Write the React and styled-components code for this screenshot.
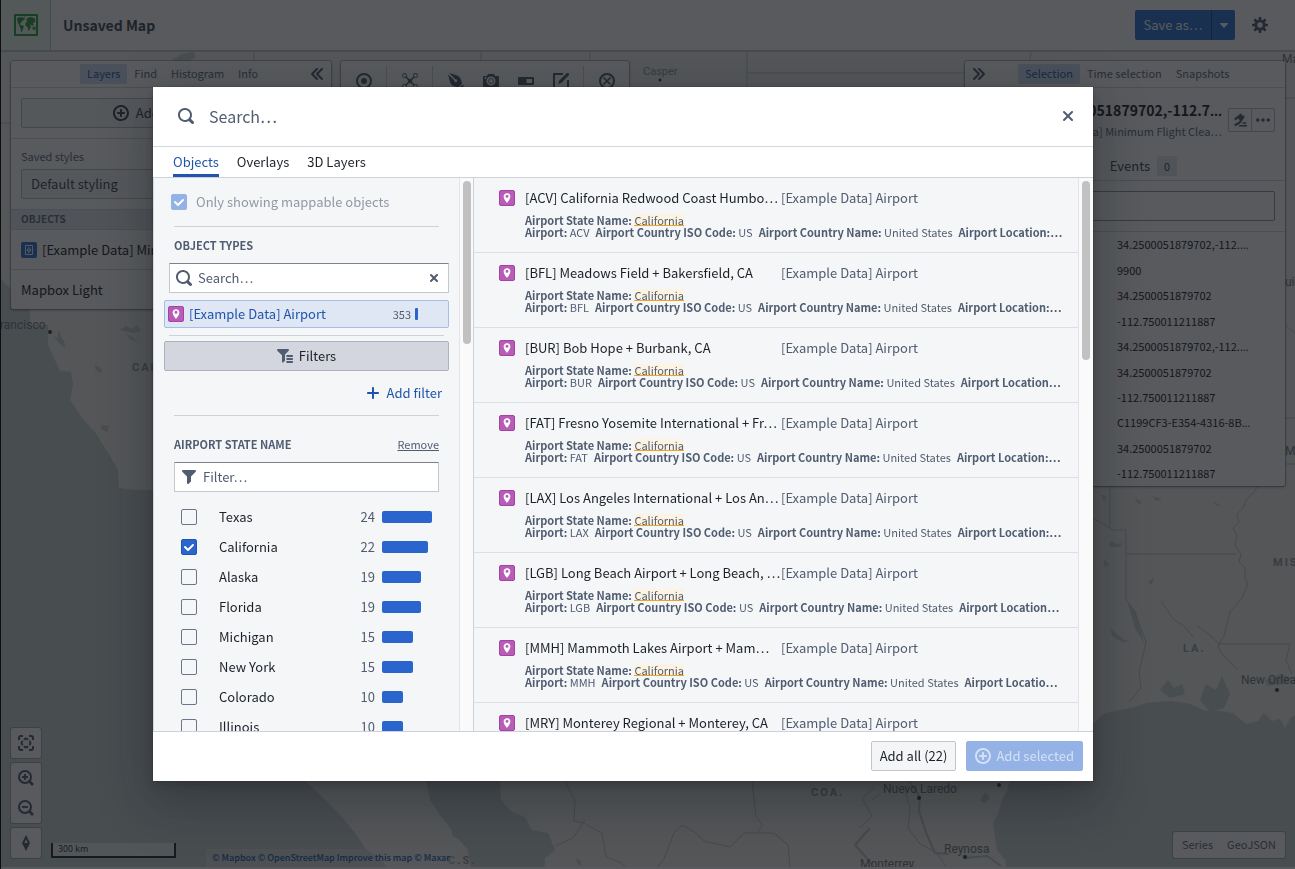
import React from "react";
import styled, { createGlobalStyle, css } from "styled-components";

const GlobalStyle = createGlobalStyle`
  *, *::before, *::after { box-sizing: border-box; }
  html, body, #root { height: 100%; }
  body {
    margin: 0;
    overflow: hidden;
    font-family: "Noto Sans CJK SC", "Noto Sans", sans-serif;
    font-size: 13px;
    line-height: 18px;
    color: #1c2127;
  }
  button, input, select { font: inherit; color: inherit; margin: 0; }
  button { cursor: pointer; }
  h1, h2, h3, p, ul, dl, dd { margin: 0; padding: 0; font-weight: inherit; font-size: inherit; }
  ul { list-style: none; }
`;

/* ---------- icons ---------- */

const PATHS = {
  search: "M15.55 13.43l-2.67-2.68a6.94 6.94 0 001.11-3.76c0-3.87-3.13-7-7-7s-7 3.13-7 7 3.13 7 7 7c1.39 0 2.68-.42 3.76-1.11l2.68 2.67a1.498 1.498 0 102.12-2.12zm-8.56-1.44c-2.76 0-5-2.24-5-5s2.24-5 5-5 5 2.24 5 5-2.24 5-5 5z",
  cross: "M9.41 8l3.29-3.29c.19-.18.3-.43.3-.71a1.003 1.003 0 00-1.71-.71L8 6.59l-3.29-3.3a1.003 1.003 0 00-1.42 1.42L6.59 8 3.3 11.29c-.19.18-.3.43-.3.71a1.003 1.003 0 001.71.71L8 9.41l3.29 3.29c.18.19.43.3.71.3a1.003 1.003 0 00.71-1.71L9.41 8z",
  smallCross: "M9.41 8l2.29-2.29c.19-.18.3-.43.3-.71a1.003 1.003 0 00-1.71-.71L8 6.59l-2.29-2.3a1.003 1.003 0 00-1.42 1.42L6.59 8 4.3 10.29c-.19.18-.3.43-.3.71a1.003 1.003 0 001.71.71L8 9.41l2.29 2.29c.18.19.43.3.71.3a1.003 1.003 0 00.71-1.71L9.41 8z",
  tick: "M12 5c-.28 0-.53.11-.71.29L7 9.59l-2.29-2.3a1.003 1.003 0 00-1.42 1.42l3 3c.18.18.43.29.71.29s.53-.11.71-.29l5-5A1.003 1.003 0 0012 5z",
  filter: "M13.99.99h-12a1.003 1.003 0 00-.71 1.71l4.71 4.71V14a1.003 1.003 0 001.71.71l2-2c.18-.18.29-.43.29-.71V7.41L14.7 2.7a1.003 1.003 0 00-.71-1.71z",
  filterList: "M1 1h10a1 1 0 01.7 1.7L8 6.6V12.400a1 1 0 01-.3.700l-1.500 1.300A.8.8 0 015 13.700V7.200L.3 2.700A1 1 0 011 1zM10 7h5.300q.7 0 .7.700v.6q0 .7-.7.700H10q-.7 0-.7-.7v-.6q0-.7.7-.7zM10 10h5.300q.7 0 .7.700v.6q0 .7-.7.700H10q-.7 0-.7-.7v-.6q0-.7.7-.7zM10 13h5.300q.7 0 .7.700v.6q0 .7-.7.700H10q-.7 0-.7-.7v-.6q0-.7.7-.7z",
  marker: "M8 1.500C5.200 1.500 3.500 3.400 3.500 6c0 3.600 4.500 8.500 4.500 8.500S12.500 9.600 12.500 6c0-2.600-1.700-4.500-4.500-4.500zm0 6.300a2 2 0 110-4 2 2 0 010 4z",
  plus: "M13 7H9V3c0-.55-.45-1-1-1s-1 .45-1 1v4H3c-.55 0-1 .45-1 1s.45 1 1 1h4v4c0 .55.45 1 1 1s1-.45 1-1V9h4c.55 0 1-.45 1-1s-.45-1-1-1z",
  add: "M10.990 6.990h-2v-2c0-.55-.45-1-1-1s-1 .45-1 1v2h-2c-.55 0-1 .45-1 1s.45 1 1 1h2v2c0 .55.45 1 1 1s1-.45 1-1v-2h2c.55 0 1-.45 1-1s-.45-1-1-1zm-3-7c-4.420 0-8 3.580-8 8s3.580 8 8 8 8-3.580 8-8-3.580-8-8-8zm0 14c-3.310 0-6-2.690-6-6s2.690-6 6-6 6 2.690 6 6-2.690 6-6 6z",
  chevronsLeft: "M4.41 8l4.29-4.29c.19-.18.3-.43.3-.71a1.003 1.003 0 00-1.710-.71l-5 5a1.014 1.014 0 000 1.420l5 5a1.003 1.003 0 001.420-1.420L4.410 8zm5 0l4.290-4.290c.19-.18.3-.43.3-.71a1.003 1.003 0 00-1.710-.71l-5 5a1.014 1.014 0 000 1.420l5 5a1.003 1.003 0 001.420-1.420L9.410 8z",
  chevronsRight: "M11.590 8L7.300 3.710C7.110 3.530 7 3.280 7 3a1.003 1.003 0 011.710-.71l5 5a1.014 1.014 0 010 1.420l-5 5a1.003 1.003 0 01-1.420-1.420L11.590 8zm-5 0L2.300 3.710C2.110 3.530 2 3.280 2 3a1.003 1.003 0 011.710-.71l5 5a1.014 1.014 0 010 1.420l-5 5a1.003 1.003 0 01-1.420-1.420L6.590 8z",
  caret: "M12 6.5c0-.28-.22-.5-.5-.5h-7a.495.495 0 00-.37.83l3.5 4c.09.1.22.17.37.17s.28-.07.37-.17l3.5-4c.08-.09.13-.2.13-.33z",
  more: "M2 6.030a2 2 0 100 4 2 2 0 100-4zM14 6.030a2 2 0 100 4 2 2 0 100-4zM8 6.030a2 2 0 100 4 2 2 0 100-4z",
  pen: "M1.200 0L6 1.600c3 .7 4.500 1.400 6 3.200 1.100 1.500 1.600 3.500 2 6L10.500 14.300C7.800 14 5.500 13.500 4.200 12.300 2.600 10.800 2 9.300 1.500 7L0 1.200l6.200 6.100a1.500 1.500 0 101-1L1.200 0zM14.800 11.700l1.200 1.100-3.600 3.200-1.200-1.200z",
  camera: "M10 8a2 2 0 11-4 0 2 2 0 014 0zM15 3h-3l-1-2H5L4 3H1a1 1 0 00-1 1v9q0 1 1 1h14q1 0 1-1V4q0-1-1-1zM2.500 6a1 1 0 110-2 1 1 0 010 2zM8 12.500a4.500 4.500 0 110-9 4.500 4.500 0 010 9zm0-1.800a2.700 2.700 0 100-5.400 2.700 2.700 0 000 5.400z",
  capsule: "M1 4h14q1 0 1 1v6q0 1-1 1H1q-1 0-1-1V5q0-1 1-1zM8.500 6v4H14V6z",
  compass: "M8 0l4 8-4 8-4-8zM8 4.200L6.300 8h3.400z",
  edit: "M5 11l1.300-3.600L13.400.4a1.400 1.400 0 012.200 2.100L8.600 9.700z",
};

const Svg = styled.svg`
  display: block;
  flex: none;
  fill: currentColor;
`;

function Icon({ name, size = 16 }) {
  return (
    <Svg width={size} height={size} viewBox="0 0 16 16" aria-hidden="true">
      <path fillRule="evenodd" d={PATHS[name]} />
    </Svg>
  );
}

const Stroked = styled(Svg)`
  fill: none;
  stroke: currentColor;
  stroke-width: ${(p) => p.$w || 2};
`;

const TargetIcon = () => (
  <Stroked width="16" height="16" viewBox="0 0 16 16"><circle cx="8" cy="8" r="7" /><circle cx="8" cy="8" r="2" fill="currentColor" /></Stroked>
);
const GraphIcon = () => (
  <Stroked width="16" height="16" viewBox="0 0 16 16" $w={1}>
    <circle cx="2.500" cy="2.500" r="2" /><circle cx="13.500" cy="2.500" r="2" /><circle cx="2.500" cy="13.500" r="2" /><circle cx="13.500" cy="13.500" r="2" />
    <path d="M4 4l8 8M12 4l-8 8" strokeWidth="1.500" /><circle cx="8" cy="8" r="1.500" fill="currentColor" />
  </Stroked>
);
const AnnotateIcon = () => (
  <Stroked width="16" height="16" viewBox="0 0 16 16"><path d="M10 1H1v14h14V7" /><path d={PATHS.edit} fill="currentColor" stroke="none" /></Stroked>
);
const ClearIcon = () => (
  <Stroked width="16" height="16" viewBox="0 0 16 16"><circle cx="8" cy="8" r="7" /><path d="M4.500 4.500l7 7M11.500 4.500l-7 7" strokeWidth="1.700" /></Stroked>
);
const CogIcon = () => (
  <Stroked width="16" height="16" viewBox="0 0 16 16">
    <circle cx="8" cy="8" r="4.200" strokeWidth="2.800" />
    <path strokeWidth="2.600" d="M8 0v3M8 13v3M0 8h3M13 8h3M2.300 2.300l2.200 2.200M11.500 11.500l2.200 2.200M13.700 2.300l-2.200 2.200M4.500 11.500l-2.200 2.200" />
  </Stroked>
);
const FitIcon = () => (
  <Stroked width="16" height="16" viewBox="0 0 16 16">
    <path d="M1 5V3q0-2 2-2h2M11 1h2q2 0 2 2v2M15 11v2q0 2-2 2h-2M5 15H3q-2 0-2-2v-2" />
    <path strokeWidth="1.800" d="M5.800 4.600L8 3.400l2.200 1.200M5.800 11.400L8 12.600l2.200-1.200M4.600 5.800L3.400 8l1.200 2.200M11.400 5.800L12.600 8l-1.200 2.200" />
  </Stroked>
);
const ZoomIcon = ({ plus }) => (
  <Stroked width="16" height="16" viewBox="0 0 16 16">
    <circle cx="7" cy="7" r="6" /><path d="M11.500 11.500l3.500 3.500" strokeWidth="2.600" /><path strokeWidth="1.800" d={plus ? "M4 7h6M7 4v6" : "M4 7h6"} />
  </Stroked>
);
const StyleIcon = () => (
  <Stroked width="14" height="14" viewBox="0 0 16 16">
    <path d="M2 7.500L9.500 1.500 7 7l5.500-3.500L7.500 11 2 14" strokeWidth="2.400" strokeLinejoin="bevel" /><path d="M7 14.500h9M11 11.500h4" strokeWidth="1.800" />
  </Stroked>
);
const DataIcon = () => (
  <Stroked width="16" height="16" viewBox="0 0 16 16" $w={1}>
    <path d="M4.500 3.500h7v9h-7z" /><path d="M8 5v1.500M8 9.500V11M6.500 7h3v2h-3z" />
  </Stroked>
);
const WorldLogo = () => (
  <Svg width="24" height="22" viewBox="0 0 24 22">
    <path fillRule="evenodd" d="M1 0h22q1 0 1 1v20q0 1-1 1H1q-1 0-1-1V1q0-1 1-1zM2 2v18h20V2z" />
    <path d="M3 4l3-1 5 1-1 2-2 1-1 2-1.500 1 1.500 1 3 1-1 3-1.500 3L7 18l-.5-4L5 11 3.500 8z" />
    <path d="M12 6l2-2.500 3-.5 4 1.500V8l-2 1 .5 2-1.500 1-1-1.500L16 11l1 2-1.500 2.500-1 1.500-1-4-2-1.500 0-2.500 2-2z" />
    <path d="M19 12.500l2.500.5v2.500l-1.500.5-1.500-1zM9 2.500h2.500v1z" />
  </Svg>
);

/* The CJK face centres an ellipsis after digits; this one keeps it on the baseline. */
const Dots = styled.span`
  font-family: "Open Sans", sans-serif;
`;

/* ---------- background application ---------- */

const AppFrame = styled.div`
  height: 100%;
  display: flex;
  flex-direction: column;
  border-left: 1px solid #000;
  background: #f6f7f9;
  overflow: hidden;
`;

const TopBar = styled.header`
  flex: none;
  height: 52px;
  display: flex;
  align-items: center;
  background: #fff;
  border-bottom: 2px solid #c5cbd3;
  padding-right: 27px;
`;

const LogoBox = styled.div`
  width: 50px;
  align-self: stretch;
  display: grid;
  place-items: center;
  background: #eef9ee;
  color: #27a03a;
  border-right: 1px solid #a3dba6;
`;

const AppTitle = styled.h1`
  flex: 1;
  padding-left: 12px;
  font-size: 14px;
  font-weight: 700;
  color: #404854;
`;

const SaveGroup = styled.div`
  display: flex;
  border-radius: 2px;
  overflow: hidden;
  margin-right: 17px;
`;

const SaveButton = styled.button`
  height: 30px;
  border: 0;
  border-left: ${(p) => (p.$split ? "1px solid #1a4a94" : "0")};
  padding: 0;
  width: ${(p) => (p.$split ? "24px" : "76px")};
  display: flex;
  align-items: center;
  justify-content: center;
  white-space: nowrap;
  background: #2d72d2;
  color: #fff;
`;

const PlainButton = styled.button`
  border: 0;
  background: none;
  padding: 0;
  display: grid;
  place-items: center;
  color: #505c70;
`;

const Stage = styled.main`
  flex: 1;
  position: relative;
  min-height: 0;
  background: #f0f0ee;
  border-bottom: 2px solid #fff;
`;

const MapCanvas = styled.svg`
  position: absolute;
  inset: 0;
  width: 100%;
  height: 100%;
  font-family: Roboto, sans-serif;
`;

const Hud = styled.div`
  position: absolute;
  inset: 0;
  padding: 9px 10px;
  display: flex;
  flex-direction: column;
  justify-content: space-between;
`;

const HudTop = styled.div`
  display: flex;
  align-items: flex-start;
  gap: 10px;
`;

const Panel = styled.section`
  width: 320px;
  background: #fff;
  border-radius: 2px;
  box-shadow: 0 0 0 1px rgba(17, 20, 24, 0.2), 0 1px 3px rgba(17, 20, 24, 0.4);
  color: #404854;
`;

const PanelTabs = styled.nav`
  height: 27px;
  display: flex;
  align-items: center;
  padding: ${(p) => p.$pad};
  border-bottom: 1px solid #d3d8de;
`;

const PanelTab = styled.button`
  border: 0;
  border-radius: 2px;
  height: 20px;
  line-height: 18px;
  padding: 0 7px 2px;
  font-size: 11px;
  white-space: nowrap;
  background: ${(p) => (p.$active ? "#cfdff7" : "transparent")};
  color: ${(p) => (p.$active ? "#215db0" : "#5f6b7c")};
`;

const TabList = styled.div`
  flex: 1;
  display: flex;
  padding-left: ${(p) => p.$l};
`;

const Spacer = styled.div`
  flex: 1;
`;

const PanelBlock = styled.div`
  padding: 10px;
  border-bottom: 1px solid #d3d8de;
`;

const OutlineButton = styled.button`
  width: 100%;
  height: 30px;
  display: flex;
  align-items: center;
  justify-content: center;
  gap: 7px;
  border: 1px solid #b9bec6;
  border-radius: 2px;
  background: #f6f7f9;
`;

const FieldLabel = styled.label`
  display: block;
  font-size: 11px;
  line-height: 14px;
  margin-bottom: 6px;
  color: #5f6b7c;
`;

const StyleSelect = styled.select`
  appearance: none;
  width: 100%;
  height: 30px;
  padding: 0 9px;
  border: 1px solid #b9bec6;
  border-radius: 2px;
  background: #f6f7f9;
`;

const PanelHeading = styled.h2`
  height: 20px;
  padding: 0 10px;
  line-height: 18px;
  font-size: 10px;
  font-weight: 700;
  color: #5f6b7c;
  background: #e5e8ec;
  border-bottom: 1px solid #d3d8de;
`;

const LayerRow = styled.div`
  height: ${(p) => p.$h || "40px"};
  display: flex;
  align-items: center;
  gap: 5px;
  padding: 0 10px;
  white-space: nowrap;
  overflow: hidden;
  color: #1c2127;
  & + & { border-top: 1px solid #d3d8de; }
`;

const DataBadge = styled.span`
  width: 16px;
  height: 16px;
  display: grid;
  place-items: center;
  border-radius: 2px;
  background: #2d72d2;
  color: #fff;
`;

const Toolbar = styled.div`
  height: 40px;
  display: flex;
  align-items: center;
  padding: 0 14px 0 15px;
  background: #fff;
  color: #505c70;
  border-radius: 2px;
  box-shadow: 0 0 0 1px rgba(17, 20, 24, 0.2), 0 1px 3px rgba(17, 20, 24, 0.4);
`;

const ToolGroup = styled.div`
  display: flex;
  gap: 19px;
  height: 30px;
  align-items: center;
  & + & { margin-left: 14px; padding-left: 15px; border-left: 1px solid #d3d8de; }
`;

const Identity = styled.div`
  display: flex;
  align-items: center;
  gap: 6px;
  padding: 11px 10px 0;
`;

const IdentityText = styled.div`
  flex: 1;
  text-align: right;
  white-space: nowrap;
  overflow: hidden;
  color: #1c2127;
`;

const IdentityTitle = styled.h2`
  font-size: 14px;
  line-height: 22px;
  font-weight: 700;
`;

const IdentitySub = styled.p`
  font-size: 11px;
  color: #5f6b7c;
`;

const IconPair = styled.div`
  display: grid;
  grid-template-columns: 22px 23px;
  height: 24px;
  border: 1px solid #b9bec6;
  border-radius: 2px;
  button + button { border-left: 1px solid #b9bec6; }
`;

const EventsTab = styled.div`
  display: flex;
  justify-content: flex-end;
  align-items: center;
  gap: 7px;
  padding: 16px 108px 4px 0;
  border-bottom: 1px solid #d3d8de;
`;

const Badge = styled.span`
  width: 20px;
  height: 20px;
  line-height: 20px;
  text-align: center;
  font-size: 11px;
  border-radius: 2px;
  background: #e5e8eb;
`;

const PropFilter = styled.input`
  width: 100%;
  height: 30px;
  border: 1px solid #8f99a8;
  border-radius: 2px;
  background: #fff;
`;

const ValueList = styled.ul`
  height: 254px;
  display: grid;
  grid-auto-rows: 1fr;
  align-items: center;
  padding-left: 152px;
  font-size: 11px;
  color: #1c2127;
`;

const HudBottom = styled.div`
  display: flex;
  align-items: flex-end;
`;

const MapControls = styled.div`
  display: grid;
  gap: 5px;
  margin-right: 10px;
`;

const ControlCard = styled.div`
  display: grid;
  grid-auto-rows: 30px;
  width: 30px;
  background: #fff;
  border-radius: 2px;
  box-shadow: 0 0 0 1px rgba(17, 20, 24, 0.2);
`;

const ScaleBar = styled.div`
  width: 125px;
  height: 15px;
  padding-left: 5px;
  font-size: 9px;
  line-height: 12px;
  color: #333;
  border: 2px solid #252a31;
  border-top: 0;
  background: rgba(255, 255, 255, 0.7);
`;

const Attribution = styled.p`
  margin: 0 0 -9px 30px;
  padding: 0 6px;
  font-size: 9px;
  line-height: 18px;
  font-weight: 500;
  white-space: nowrap;
  border-radius: 2px 2px 0 0;
  background: rgba(255, 255, 255, 0.3);
  a { color: #215db0; text-decoration: none; }
`;

const ExportCard = styled.div`
  display: flex;
  align-items: center;
  padding: 0 2px;
  height: 26px;
  background: #fff;
  border-radius: 2px;
  box-shadow: 0 0 0 1px rgba(17, 20, 24, 0.2);
`;

/* ---------- dialog ---------- */

const Backdrop = styled.div`
  position: fixed;
  inset: 0;
  display: flex;
  padding: 87px 202px 88px 153px;
  background: rgba(17, 20, 24, 0.7);
`;

const Dialog = styled.section`
  flex: 1;
  min-width: 0;
  display: flex;
  flex-direction: column;
  background: #fff;
  box-shadow: 0 0 0 1px rgba(17, 20, 24, 0.1), 0 4px 8px rgba(17, 20, 24, 0.2), 0 18px 46px 6px rgba(17, 20, 24, 0.3);
`;

const DialogHeader = styled.header`
  flex: none;
  height: 60px;
  display: flex;
  align-items: center;
  gap: 15px;
  padding: 0 17px 2px 25px;
  color: #505c70;
  border-bottom: 1px solid #d3d8de;
`;

const BareInput = styled.input`
  flex: 1;
  min-width: 0;
  border: 0;
  outline: 0;
  padding: 0;
  background: none;
  font-size: ${(p) => (p.$large ? "16px" : "13px")};
  &::placeholder { color: #505c70; opacity: 1; }
`;

const DialogTabs = styled.nav`
  flex: none;
  height: 31px;
  display: flex;
  gap: 18px;
  padding-left: 20px;
  border-bottom: 1px solid #cdd2da;
`;

const DialogTab = styled.button`
  height: 30px;
  border: 0;
  padding: 3px 0 0;
  background: none;
  white-space: nowrap;
  border-bottom: 3px solid ${(p) => (p.$active ? "#1f55ad" : "transparent")};
  color: ${(p) => (p.$active ? "#1f55ad" : "#1c2127")};
`;

const DialogBody = styled.div`
  flex: 1;
  min-height: 0;
  display: grid;
  grid-template-columns: 321px minmax(0, 1fr);
  grid-template-rows: minmax(0, 1fr);
  background: #f4f6f8;
`;

const ScrollPane = styled.div`
  display: grid;
  grid-template-columns: minmax(0, 1fr) ${(p) => (p.$framed ? "14px" : "15px")};
  grid-template-rows: minmax(0, 1fr);
  border-left: ${(p) => (p.$framed ? "1px solid #d3d8de" : "0")};
  border-right: ${(p) => (p.$framed ? "1px solid #cdd2da" : "0")};
`;

const ScrollArea = styled.div`
  overflow: auto;
  scrollbar-width: none;
`;

const Track = styled.div`
  padding: 3px;
  background: #fafafa;
  border-left: 1px solid #e2e4e8;
`;

const Thumb = styled.div`
  width: 8px;
  height: ${(p) => p.$length};
  border-radius: 4px;
  background: #c1c1c1;
`;

const Facets = styled(ScrollArea)`
  padding: 16px 10px 0;
`;

const inset = css`
  margin-left: ${(p) => p.$l || "10px"};
  margin-right: ${(p) => p.$r || "10px"};
`;

const Rule = styled.hr`
  ${inset}
  margin-top: ${(p) => p.$t};
  margin-bottom: 0;
  border: 0;
  border-top: 1px solid #cdd2da;
`;

const CheckRow = styled.label`
  display: flex;
  align-items: center;
  gap: 9px;
  height: 16px;
  padding-left: 7px;
  color: #9299a6;
`;

const CheckWrap = styled.span`
  display: grid;
  width: 16px;
  height: 16px;
  color: #fff;
  > * { grid-area: 1 / 1; }
  svg { pointer-events: none; z-index: 1; }
`;

const CheckInput = styled.input`
  appearance: none;
  width: 16px;
  height: 16px;
  border: 1px solid #6a7688;
  border-radius: 2px;
  &:checked { border-color: #1f55b0; background: #2965cc; }
  &:disabled { border-color: #93b2e5; background: #93b2e5; }
`;

function Checkbox({ checked, disabled, id }) {
  return (
    <CheckWrap>
      <CheckInput type="checkbox" id={id} defaultChecked={checked} disabled={disabled} />
      {checked && <Icon name="tick" />}
    </CheckWrap>
  );
}

const Caption = styled.h3`
  font-size: 11px;
  line-height: 18px;
  font-weight: 700;
  color: #505c70;
`;

const TypeCaption = styled(Caption)`
  margin: 9px 10px;
`;

const InputBox = styled.div`
  ${inset}
  height: 30px;
  display: flex;
  align-items: center;
  gap: 6px;
  padding: 0 6px;
  color: #505c70;
  background: #fff;
  border: 1px solid #c3c7ce;
  border-top-color: #7d8289;
  border-radius: 1px;
`;

const TypeRow = styled.button`
  width: 100%;
  height: 28px;
  margin-top: 7px;
  display: flex;
  align-items: center;
  padding: 0 30px 0 3px;
  border: 1px solid #a7bde4;
  border-radius: 2px;
  background: #dfe6f4;
  color: #1f55ad;
`;

const TypeName = styled.span`
  flex: 1;
  text-align: left;
  padding-left: 5px;
`;

const TypeCount = styled.span`
  font-size: 11px;
  color: #505c70;
`;

const TypeBar = styled.span`
  width: 3px;
  height: 12px;
  margin-left: 4px;
  border-radius: 1px;
  background: #2965cc;
`;

const MarkerBadge = styled.span`
  width: 16px;
  height: 16px;
  flex: none;
  display: grid;
  place-items: center;
  border: 1px solid #a344a3;
  border-radius: 2px;
  background: #b85cb8;
  color: #fff;
`;

const FiltersButton = styled.button`
  width: 100%;
  height: 30px;
  margin-top: 5px;
  display: flex;
  align-items: center;
  justify-content: center;
  gap: 6px;
  border: 1px solid #aeb2ba;
  border-radius: 2px;
  background: #d3d6de;
  svg { color: #505c70; }
`;

const AddFilter = styled.button`
  display: flex;
  align-items: center;
  gap: 6px;
  margin: 13px 7px 13px auto;
  border: 0;
  padding: 0;
  background: none;
  color: #1f55ad;
`;

const FacetHead = styled.div`
  display: flex;
  justify-content: space-between;
  align-items: center;
  margin: 19px 10px 9px;
  color: #505c70;
`;

const RemoveButton = styled.button`
  border: 0;
  padding: 0;
  background: none;
  font-size: 11px;
  text-decoration: underline;
`;

const FacetList = styled.ul`
  padding: 10px 17px 0;
`;

const FacetRow = styled.li`
  height: 30px;
  display: grid;
  grid-template-columns: 16px 1fr auto 50px;
  align-items: center;
`;

const FacetLabel = styled.label`
  padding-left: 22px;
`;

const FacetCount = styled.span`
  padding-right: 7px;
  color: #505c70;
`;

const FacetBar = styled.span`
  height: 12px;
  border-radius: 2px;
  background: #2965cc;
`;

const ResultRow = styled.li`
  height: 75px;
  display: grid;
  grid-template-columns: 16px 246px minmax(0, 1fr);
  column-gap: 10px;
  align-content: start;
  align-items: center;
  padding: 11px 16px 0 25px;
  white-space: nowrap;
  border-bottom: 1px solid #dcdfe4;
`;

const ResultType = styled.span`
  color: #505c70;
`;

const Meta = styled.div`
  grid-column: 2 / -1;
  padding-top: 7px;
  font-size: 11px;
  line-height: 12px;
  color: #505c70;
`;

const MetaLine = styled.p`
  height: 12px;
  display: flex;
  gap: 6px;
`;

const Match = styled.mark`
  display: inline-block;
  height: 12px;
  line-height: 12px;
  color: inherit;
  background: #fdf3e3;
  border-bottom: 1px solid #f0a51e;
`;

const DialogFooter = styled.footer`
  flex: none;
  height: 50px;
  display: flex;
  justify-content: flex-end;
  align-items: center;
  gap: 10px;
  padding: 0 10px 1px 0;
  border-top: 1px solid #cdd2da;
`;

const FooterButton = styled.button`
  height: 30px;
  display: flex;
  align-items: center;
  gap: 5px;
  padding: 0 8px 1px;
  white-space: nowrap;
  border-radius: 2px;
  border: 1px solid ${(p) => (p.$primary ? "#94b2e5" : "#c3c5ca")};
  background: ${(p) => (p.$primary ? "#94b2e5" : "#f4f5f7")};
  color: ${(p) => (p.$primary ? "#d4e0f5" : "#1c2127")};
`;

/* ---------- data ---------- */

const STATES = [
  ["Texas", 24, 50],
  ["California", 22, 46],
  ["Alaska", 19, 39],
  ["Florida", 19, 39],
  ["Michigan", 15, 31],
  ["New York", 15, 31],
  ["Colorado", 10, 21],
  ["Illinois", 10, 21],
];

const AIRPORTS = [
  ["ACV", "California Redwood Coast Humbo…", "Airport Location:…"],
  ["BFL", "Meadows Field + Bakersfield, CA", "Airport Location:…"],
  ["BUR", "Bob Hope + Burbank, CA", "Airport Location…"],
  ["FAT", "Fresno Yosemite International + Fr…", "Airport Location:…"],
  ["LAX", "Los Angeles International + Los An…", "Airport Location:…"],
  ["LGB", "Long Beach Airport + Long Beach, …", "Airport Location…"],
  ["MMH", "Mammoth Lakes Airport + Mam…", "Airport Locatio…"],
  ["MRY", "Monterey Regional + Monterey, CA", "Airport Location…"],
];

const VALUES = [
  ["34.2500051879702,-112.", true],
  ["9900"],
  ["34.2500051879702"],
  ["-112.750011211887"],
  ["34.2500051879702,-112.", true],
  ["34.2500051879702"],
  ["-112.750011211887"],
  ["C1199CF3-E354-4316-8B", true],
  ["34.2500051879702"],
  ["-112.750011211887"],
];

/* ---------- map ---------- */

function MapDrawing() {
  return (
    <MapCanvas viewBox="1 52 1294 815" preserveAspectRatio="xMinYMin slice">
      <g fill="#cad2d3">
        <path d="M0 278l11 11 19 20v16h18v20l12 26 11 1 2 12-3 16 12 18 13 14 15 24 8 14 1 18 16 2 18 0 20 10 30 100 90 170 22 20 28 28 12 15 10 15 18 14 10 15H0z" />
        <path d="M425 775h75l1 25 11 12 13 5 7 13 16 3 7 17-10 8-1 16h-72l-4-24-13-15-15-20-10-15z" />
        <path d="M1012 770l-4 18-6 12-4 14-5 9 4 27 8 10 3 14h292V714l-9 3-6 11-5-9-8 2-8-8-6 8-12 3-13-11-15-2-12 0-16-7-18-3-25 2-15 5-14 2-15 4-40 40z" />
        <path d="M172 60l10-6 12-2 2 5-12 7-12 1zM450 825l6 8 2 6-5-3zM1110 541l7 3 6-1-4 4-9 0zM1128 603l8 10 8 30-9-15zM1110 628l14 12 6 1-8 1-10-6zM120 330l6-4 6 3 5-4 4 6-8 2zM58 330l4 8 4 8-8-4zM130 510l6 1 5 2-5 2zM575 858l6 3-1 6zM990 798l-6 6-4-4 5-8z" />
        <path d="M1160 690l8-10 6 8 8-4 3 10-15 4zM1200 700l6-16 10 6 6-14 8 18-6 14-14 4zM1265 680l16-6 10 4-6 6-18 2zM53 336l8 9 4 3-2-8zM126 334l6 3 6 5-8-3zM95 365l6 3 1 5-6-3zM102 425l7 1-2 6-6-3zM1101 494l5 2-2 6zM1134 498l8 4-3 2zM1152 496l10 3-6 2zM1212 501l10 5-5 0zM1103 559l7 6-5 2zM1148 582l6-5-2 8z" />
      </g>
      <g fill="none" stroke="#c4c6c8" strokeWidth="1">
        <path d="M0 123h10M254 52v10M481 52v12M590 52v8M747 52v35M747 73h220M1031 52l-1 8M1110 480v48M1093 518l20 12 13 0v70M1126 554h110M1126 600l8 10 12 32-7 30 2 16-12 14M1258 486l-4 6-8 8-3 8-6 6 2 8-6 6 4 8-2 10 6 8-2 8 6 6 0 10 3 6-6 14-12 14-6 24-6 10 4 8 8 8 8 8M1218 644h72l-4 16 6 14M1285 98h10M1285 418h10M1285 464h10M1285 325l10 8M1161 601l8 12 4 6 12 8 8 10M1197 626l14 10 8 8" />
        <path d="M565 781l10 20-1 20 10 2 18 10 4 24 16 6 10 14M585 820l-12 18-18 8M752 781l4 36 6 8-4 8-14 0-14 14-26-6-8-8-14-8-8 8-10 26-8 10M758 833l16 0 14 12 2 24M905 790l5 18-2 20 12 16 16 8 12 17M872 800l8-6M860 828l12-12-10-18 12-10" />
        <path d="M905 775l15 22-1 14 8 24 8 18 14 1M965 858l22-2 14 10M855 845l15-17M855 845l18 20" strokeWidth="2" />
      </g>
      <g fill="#777b80" fontSize="12">
        <text x="643" y="75" fontSize="11" fill="#94989c">Casper</text>
        <text x="0" y="329">rancisco</text>
        <text x="883" y="793">Nuevo Laredo</text>
        <text x="944" y="853">Reynosa</text>
        <text x="860" y="868">Monterrey</text>
        <text x="1241" y="684">New Orleans</text>
        <text x="1282" y="63">Madison</text>
        <text x="1285" y="286">uis</text>
        <text x="1285" y="455">Memphis</text>
        <g fontSize="11" fontWeight="700" fill="#9a9da1">
          <text x="132" y="371" letterSpacing="2">CALIFORNIA</text>
          <text x="811" y="796" letterSpacing="2">COA.</text>
          <text x="448" y="864" letterSpacing="2">C.S.</text>
          <text x="1183" y="652" letterSpacing="2">LA.</text>
          <text x="1273" y="566" letterSpacing="2">MISS.</text>
        </g>
      </g>
      <g fill="#3d4045">
        <circle cx="50" cy="332" r="2" /><circle cx="919" cy="798" r="2" /><circle cx="999" cy="785" r="2" /><circle cx="965" cy="857" r="2" /><circle cx="1277" cy="690" r="2" /><circle cx="660" cy="80" r="1.500" />
      </g>
    </MapCanvas>
  );
}

function LayersPanel() {
  return (
    <Panel>
      <PanelTabs $pad="0 6px 1px 0">
        <TabList $l="69px">
          <PanelTab $active>Layers</PanelTab>
          <PanelTab>Find</PanelTab>
          <PanelTab>Histogram</PanelTab>
          <PanelTab>Info</PanelTab>
        </TabList>
        <PlainButton aria-label="Collapse"><Icon name="chevronsLeft" /></PlainButton>
      </PanelTabs>
      <PanelBlock>
        <OutlineButton><Icon name="add" />Add map layers</OutlineButton>
      </PanelBlock>
      <PanelBlock>
        <FieldLabel htmlFor="saved-styles">Saved styles</FieldLabel>
        <StyleSelect id="saved-styles"><option>Default styling</option></StyleSelect>
      </PanelBlock>
      <PanelHeading>OBJECTS</PanelHeading>
      <LayerRow $h="39px"><DataBadge><DataIcon /></DataBadge>[Example Data] Minimum Flight Clearance</LayerRow>
      <LayerRow>Mapbox Light</LayerRow>
    </Panel>
  );
}

function SelectionPanel() {
  return (
    <Panel>
      <PanelTabs $pad="0 0 1px 6px">
        <PlainButton aria-label="Collapse"><Icon name="chevronsRight" /></PlainButton>
        <TabList $l="31px">
          <PanelTab $active>Selection</PanelTab>
          <PanelTab>Time selection</PanelTab>
          <PanelTab>Snapshots</PanelTab>
        </TabList>
      </PanelTabs>
      <Identity>
        <IdentityText>
          <IdentityTitle>34.2500051879702,-112.7<Dots>…</Dots></IdentityTitle>
          <IdentitySub>[Example Data] Minimum Flight Clea…</IdentitySub>
        </IdentityText>
        <IconPair>
          <PlainButton aria-label="Style"><StyleIcon /></PlainButton>
          <PlainButton aria-label="More"><Icon name="more" size={14} /></PlainButton>
        </IconPair>
      </Identity>
      <EventsTab>Events <Badge>0</Badge></EventsTab>
      <PanelBlock><PropFilter aria-label="Filter properties" /></PanelBlock>
      <ValueList>
        {VALUES.map(([value, cut], i) => <li key={i}>{value}{cut && <Dots>…</Dots>}</li>)}
      </ValueList>
    </Panel>
  );
}

function Background() {
  return (
    <AppFrame>
      <TopBar>
        <LogoBox><WorldLogo /></LogoBox>
        <AppTitle>Unsaved Map</AppTitle>
        <SaveGroup>
          <SaveButton>Save as…</SaveButton>
          <SaveButton $split aria-label="Save options"><Icon name="caret" /></SaveButton>
        </SaveGroup>
        <PlainButton aria-label="Settings"><CogIcon /></PlainButton>
      </TopBar>
      <Stage>
        <MapDrawing />
        <Hud>
          <HudTop>
            <LayersPanel />
            <Toolbar>
              <ToolGroup><TargetIcon /></ToolGroup>
              <ToolGroup><GraphIcon /></ToolGroup>
              <ToolGroup><Icon name="pen" /><Icon name="camera" /><Icon name="capsule" /><AnnotateIcon /></ToolGroup>
              <ToolGroup><ClearIcon /></ToolGroup>
            </Toolbar>
            <Spacer />
            <SelectionPanel />
          </HudTop>
          <HudBottom>
            <MapControls>
              <ControlCard><PlainButton aria-label="Fit"><FitIcon /></PlainButton></ControlCard>
              <ControlCard>
                <PlainButton aria-label="Zoom in"><ZoomIcon plus /></PlainButton>
                <PlainButton aria-label="Zoom out"><ZoomIcon /></PlainButton>
              </ControlCard>
              <ControlCard><PlainButton aria-label="North"><Icon name="compass" /></PlainButton></ControlCard>
            </MapControls>
            <ScaleBar>300 km</ScaleBar>
            <Attribution>
              <a href="#mapbox">© Mapbox</a> <a href="#osm">© OpenStreetMap</a> <a href="#improve">Improve this map</a> <a href="#maxar">© Maxar</a>
            </Attribution>
            <Spacer />
            <ExportCard>
              <PanelTab>Series</PanelTab>
              <PanelTab>GeoJSON</PanelTab>
            </ExportCard>
          </HudBottom>
        </Hud>
      </Stage>
    </AppFrame>
  );
}

function FacetPane() {
  return (
    <ScrollPane $framed>
      <Facets>
        <CheckRow><Checkbox checked disabled />Only showing mappable objects</CheckRow>
        <Rule $t="16px" />
        <TypeCaption>OBJECT TYPES</TypeCaption>
        <InputBox $l="5px" $r="0">
          <Icon name="search" />
          <BareInput aria-label="Search object types" placeholder="Search…" />
          <PlainButton aria-label="Clear"><Icon name="smallCross" /></PlainButton>
        </InputBox>
        <TypeRow>
          <MarkerBadge><Icon name="marker" size={12} /></MarkerBadge>
          <TypeName>[Example Data] Airport</TypeName>
          <TypeCount>353</TypeCount>
          <TypeBar />
        </TypeRow>
        <Rule $t="7px" $l="5px" $r="5px" />
        <FiltersButton><Icon name="filterList" />Filters</FiltersButton>
        <AddFilter><Icon name="plus" />Add filter</AddFilter>
        <Rule $t="0" />
        <FacetHead>
          <Caption>AIRPORT STATE NAME</Caption>
          <RemoveButton>Remove</RemoveButton>
        </FacetHead>
        <InputBox>
          <Icon name="filter" />
          <BareInput aria-label="Filter states" placeholder="Filter…" />
        </InputBox>
        <FacetList>
          {STATES.map(([name, count, width]) => (
            <FacetRow key={name}>
              <Checkbox id={`state-${name}`} checked={name === "California"} />
              <FacetLabel htmlFor={`state-${name}`}>{name}</FacetLabel>
              <FacetCount>{count}</FacetCount>
              <FacetBar style={{ width }} />
            </FacetRow>
          ))}
        </FacetList>
      </Facets>
      <Track><Thumb $length="163px" /></Track>
    </ScrollPane>
  );
}

function ResultsPane() {
  return (
    <ScrollPane>
      <ScrollArea>
        <ul>
          {AIRPORTS.map(([code, name, location]) => (
            <ResultRow key={code}>
              <MarkerBadge><Icon name="marker" size={12} /></MarkerBadge>
              <h3>[{code}] {name}</h3>
              <ResultType>[Example Data] Airport</ResultType>
              <Meta>
                <MetaLine><span><b>Airport State Name:</b> <Match>California</Match></span></MetaLine>
                <MetaLine>
                  <span><b>Airport:</b> {code}</span>
                  <span><b>Airport Country ISO Code:</b> US</span>
                  <span><b>Airport Country Name:</b> United States</span>
                  <b>{location}</b>
                </MetaLine>
              </Meta>
            </ResultRow>
          ))}
        </ul>
      </ScrollArea>
      <Track><Thumb $length="179px" /></Track>
    </ScrollPane>
  );
}

export default function App() {
  return (
    <>
      <GlobalStyle />
      <Background />
      <Backdrop>
        <Dialog role="dialog" aria-label="Add to map">
          <DialogHeader>
            <Icon name="search" />
            <BareInput $large aria-label="Search" placeholder="Search…" />
            <PlainButton aria-label="Close"><Icon name="cross" /></PlainButton>
          </DialogHeader>
          <DialogTabs>
            <DialogTab $active>Objects</DialogTab>
            <DialogTab>Overlays</DialogTab>
            <DialogTab>3D Layers</DialogTab>
          </DialogTabs>
          <DialogBody>
            <FacetPane />
            <ResultsPane />
          </DialogBody>
          <DialogFooter>
            <FooterButton>Add all (22)</FooterButton>
            <FooterButton $primary disabled><Icon name="add" />Add selected</FooterButton>
          </DialogFooter>
        </Dialog>
      </Backdrop>
    </>
  );
}
